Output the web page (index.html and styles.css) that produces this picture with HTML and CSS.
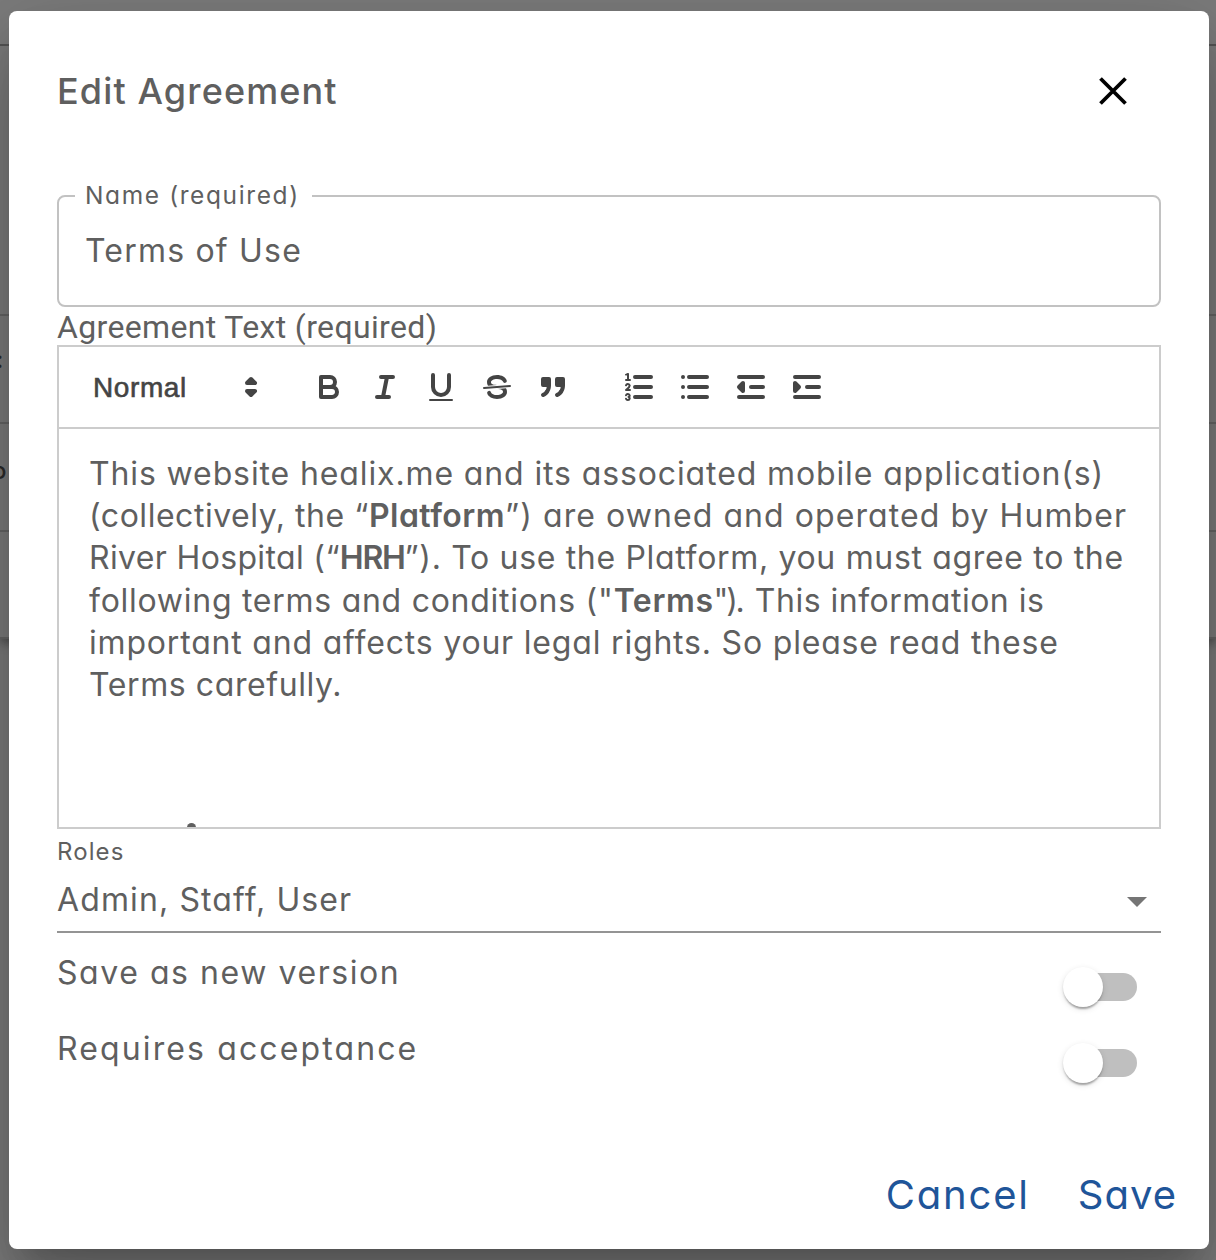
FILE: index.html
```html
<!DOCTYPE html>
<html lang="en">
<head>
<meta charset="utf-8">
<title>Edit Agreement</title>
<link rel="stylesheet" href="styles.css">
</head>
<body>
<div class="page">
  <div class="page-card">
    <div class="page-row row-head"></div>
    <div class="page-row row-tall"></div>
    <div class="page-row"><span class="cell-end">:</span></div>
    <div class="page-row"><span class="cell-end cell-o">o</span></div>
    <div class="page-row row-last"></div>
  </div>
</div>
<div class="overlay">
<main class="dialog" role="dialog" aria-label="Edit Agreement">
  <header class="dialog-head">
    <h1 class="title">Edit Agreement</h1>
    <button class="close" aria-label="Close"><svg width="28" height="28" viewBox="0 0 28 28"><path d="M1.5 1.5 26.5 26.5M26.5 1.5 1.5 26.5"/></svg></button>
  </header>
  <fieldset class="field">
    <legend>Name (required)</legend>
    <div class="field-value">Terms of Use</div>
  </fieldset>
  <div class="editor-label">Agreement Text (required)</div>
  <section class="editor">
    <div class="toolbar">
      <div class="picker"><span>Normal</span>
        <svg class="q" viewBox="0 0 18 18"><polygon class="s f" points="7 11 9 13 11 11 7 11"/><polygon class="s f" points="7 7 9 5 11 7 7 7"/></svg>
      </div>
      <div class="tools">
        <button aria-label="Bold"><svg class="q" viewBox="0 0 18 18"><path class="s" d="M5,4H9.5A2.5,2.5,0,0,1,12,6.5v0A2.5,2.5,0,0,1,9.5,9H5V4Z"/><path class="s" d="M5,9h5.5A2.5,2.5,0,0,1,13,11.5v0A2.5,2.5,0,0,1,10.5,14H5V9Z"/></svg></button>
        <button aria-label="Italic"><svg class="q" viewBox="0 0 18 18"><path class="s" d="M7 4H13M5 14H11M8 14 10 4"/></svg></button>
        <button aria-label="Underline"><svg class="q" viewBox="0 0 18 18"><path class="s" d="M5,3V9a4.012,4.012,0,0,0,4,4H9a4.012,4.012,0,0,0,4-4V3"/><rect class="f" height="1" rx="0.5" width="12" x="3" y="15"/></svg></button>
        <button aria-label="Strikethrough"><svg class="q" viewBox="0 0 18 18"><path class="s thin" d="M15.5 8.5 2.5 9.5"/><path class="f" d="M9.007,8C6.542,7.791,6,7.519,6,6.5,6,5.792,7.283,5,9,5c1.571,0,2.765.679,2.969,1.309a1,1,0,0,0,1.9-.617C13.356,4.106,11.354,3,9,3,6.2,3,4,4.538,4,6.5a3.2,3.2,0,0,0,.5,1.843Z"/><path class="f" d="M8.984,10C11.457,10.208,12,10.479,12,11.5c0,0.708-1.283,1.5-3,1.5-1.571,0-2.765-.679-2.969-1.309a1,1,0,1,0-1.9.617C4.644,13.894,6.646,15,9,15c2.8,0,5-1.538,5-3.5a3.2,3.2,0,0,0-.5-1.843Z"/></svg></button>
        <button aria-label="Quote"><svg class="q" viewBox="0 0 18 18"><g class="s f"><rect height="3" width="3" x="4" y="5"/><rect height="3" width="3" x="11" y="5"/><path d="M7,8c0,4.031-3,5-3,5"/><path d="M14,8c0,4.031-3,5-3,5"/></g></svg></button>
      </div>
      <div class="tools">
        <button aria-label="Numbered list"><svg class="q" viewBox="0 0 18 18"><path class="s" d="M7 4H15M7 9H15M7 14H15"/><path class="s thin" d="M2.5 5.5H4.5"/><path class="f" d="M3.5,6A0.5,0.5,0,0,1,3,5.5V3.085l-0.276.138A0.5,0.5,0,0,1,2.053,3c-0.124-.247-0.023-0.324.224-0.447l1-.5A0.5,0.5,0,0,1,4,2.5v3A0.5,0.5,0,0,1,3.5,6Z"/><path class="s thin" d="M4.5,10.5h-2c0-.234,1.85-1.076,1.85-2.234A0.959,0.959,0,0,0,2.5,8.156"/><path class="s thin" d="M2.5,14.846a0.959,0.959,0,0,0,1.85-.109A0.7,0.7,0,0,0,3.75,14a0.688,0.688,0,0,0,.6-0.736,0.959,0.959,0,0,0-1.85-.109"/></svg></button>
        <button aria-label="Bulleted list"><svg class="q" viewBox="0 0 18 18"><path class="s" d="M6 4H15M6 9H15M6 14H15M3 4H3M3 9H3M3 14H3"/></svg></button>
        <button aria-label="Outdent"><svg class="q" viewBox="0 0 18 18"><path class="s" d="M3 14H15M3 4H15M9 9H15"/><polygon class="s f" points="5 7 5 11 3 9 5 7"/></svg></button>
        <button aria-label="Indent"><svg class="q" viewBox="0 0 18 18"><path class="s" d="M3 14H15M3 4H15M9 9H15"/><polygon class="s f" points="3 7 3 11 5 9 3 7"/></svg></button>
      </div>
    </div>
    <div class="content">
      <p><span class="l1">This website healix.me and its associated mobile application(s)</span><br>
      <span class="l2">(collectively, the “<strong>Platform</strong><span class="tail">”) are owned and operated by Humber</span></span><br>
      <span class="l3">River Hospital (“<strong>HRH</strong><span class="tail">”). To use the Platform, you must agree to the</span></span><br>
      <span class="l4">following terms and conditions ("<strong>Terms</strong><span class="tail"><span class="close-quote">")</span>. This information is</span></span><br>
      <span class="l5">important and affects your legal rights. So please read these</span><br>
      <span class="l6">Terms carefully.</span></p>
      <div class="next-line"></div>
    </div>
  </section>
  <div class="select">
    <div class="select-label">Roles</div>
    <div class="select-value"><span class="chosen">Admin, Staff, User</span><i class="caret"></i></div>
  </div>
  <div class="toggle-row"><span class="save-as">Save as new version</span><span class="switch"></span></div>
  <div class="toggle-row"><span class="requires">Requires acceptance</span><span class="switch"></span></div>
  <footer class="actions"><button class="cancel">Cancel</button><button class="save">Save</button></footer>
</main>
</div>
</body>
</html>
```
FILE: styles.css
```css
* { box-sizing: border-box; }
html, body { height: 100%; }
body {
  margin: 0;
  overflow: hidden;
  background: #7c7c7c;
  color: #5f5f5f;
  font-family: Inter, "Liberation Sans", sans-serif;
  font-feature-settings: "cv11";
}
button { border: 0; padding: 0; background: none; font: inherit; color: inherit; display: block; }

/* dimmed page behind the dialog */
.page { height: 1260px; }
.page-card { height: 639px; box-shadow: 0 4px 10px rgba(0, 0, 0, .4); background: #7c7c7c; }
.page-row { height: 108px; border-bottom: 2px solid #666; display: flex; align-items: center; }
.row-head { height: 46px; border-color: #555; }
.row-tall { height: 270px; }
.row-last { height: 107px; }
.cell-end { font-size: 24px; font-weight: 500; color: #2a2a2a; margin-left: -4px; line-height: 30px; margin-top: -18px; }
.cell-o { margin-left: -8px; margin-top: -12px; }

.overlay { position: absolute; inset: 0; padding: 11px 7px 11px 9px; display: flex; }
.dialog {
  flex: 1;
  display: flex;
  flex-direction: column;
  padding: 0 48px;
  background: #fff;
  border-radius: 8px;
  box-shadow: 0 22px 30px -14px rgba(0, 0, 0, .2), 0 48px 76px 6px rgba(0, 0, 0, .14), 0 18px 92px 16px rgba(0, 0, 0, .12);
}
.dialog-head { height: 170px; padding: 53px 34px 0 0; display: flex; justify-content: space-between; align-items: flex-start; }
.title { margin: 0; font-size: 36px; font-weight: 500; line-height: 54px; letter-spacing: 1.12px; }
.close { padding-top: 13px; }
.close svg { display: block; stroke: #000; stroke-width: 3.8; fill: none; }

.field { margin: 0; height: 126px; border: 2px solid #c2c2c2; border-radius: 8px; padding: 0 26px; }
.field legend { margin-left: -10px; padding: 0 12px 0 10px; height: 30px; line-height: 28px; font-size: 24.5px; letter-spacing: 1.61px; }
.field-value { font-size: 32px; line-height: 46px; margin-top: 17px; letter-spacing: 1.2px; }
.editor-label { font-family: Roboto, sans-serif; font-size: 32px; line-height: 38px; height: 38px; padding-top: 1px; letter-spacing: .35px; }

.editor { height: 484px; border: 2px solid #ccc; }
.toolbar { height: 82px; padding: 16px; border-bottom: 2px solid #ccc; display: flex; gap: 30px; }
.picker { width: 196px; height: 48px; padding: 0 2px 0 18px; display: flex; align-items: center; justify-content: space-between; font: 28px "Liberation Sans", sans-serif; color: #444; -webkit-text-stroke: .6px #444; letter-spacing: .6px; }
.picker span { padding-top: 2px; }
.tools { display: flex; }
.tools button { width: 56px; height: 48px; padding: 6px 10px; }
.q { width: 36px; height: 36px; display: block; }
.s { fill: none; stroke: #444; stroke-width: 2; stroke-linecap: round; stroke-linejoin: round; }
.s.thin { stroke-width: 1; }
.f { fill: #444; }

.content { height: 398px; overflow: hidden; padding: 24px 30px 0; font-size: 32px; line-height: 42.24px; white-space: nowrap; }
.content p { margin: 0; height: 370px; }
.content strong { font-weight: 600; }
.l1 { letter-spacing: .88px; }
.l2 { letter-spacing: .53px; }
.l2 strong { letter-spacing: .48px; }
.l2 .tail { letter-spacing: 1.07px; }
.l3 { letter-spacing: .35px; }
.l3 strong { letter-spacing: -1.3px; }
.l3 .tail { letter-spacing: .67px; }
.l4 { letter-spacing: .73px; }
.l4 strong { letter-spacing: .6px; }
.l4 .tail { letter-spacing: .5px; }
.l4 .close-quote { letter-spacing: -2.3px; }
.l5 { letter-spacing: .81px; }
.l6 { letter-spacing: .59px; }
.next-line { margin-left: 98px; width: 9px; height: 9px; border-radius: 50%; background: #5f5f5f; }

.select { height: 104px; border-bottom: 2px solid #949494; }
.select-label { font-size: 24px; line-height: 28px; padding-top: 9px; letter-spacing: 1.1px; }
.select-value { display: flex; justify-content: space-between; align-items: center; font-size: 32px; line-height: 46px; padding: 11px 14px 0 0; letter-spacing: 1.12px; }
.caret { border: 10px solid transparent; border-top-color: #757575; border-bottom: 0; margin-top: 4px; }
.toggle-row { height: 76px; padding: 16px 24px 0 0; display: flex; justify-content: space-between; font-size: 32px; line-height: 48px; }
.save-as { letter-spacing: 1.56px; }
.requires { letter-spacing: 2.12px; }
.switch { width: 72px; height: 28px; margin-top: 24px; border-radius: 14px; background: #bfbfbf; }
.switch::before { content: ""; display: block; width: 40px; height: 40px; margin: -6px 0 0 -2px; border-radius: 50%; background: #fff; box-shadow: 0 4px 2px -2px rgba(0, 0, 0, .2), 0 2px 2px rgba(0, 0, 0, .14), 0 2px 6px rgba(0, 0, 0, .12); }
.actions { margin-top: auto; height: 90px; display: flex; justify-content: flex-end; gap: 48px; margin-right: -16px; color: #1f5599; font-size: 40px; line-height: 60px; align-items: flex-start; padding-top: 6px; }
.cancel { letter-spacing: 1.8px; }
.save { letter-spacing: 1px; }
```
